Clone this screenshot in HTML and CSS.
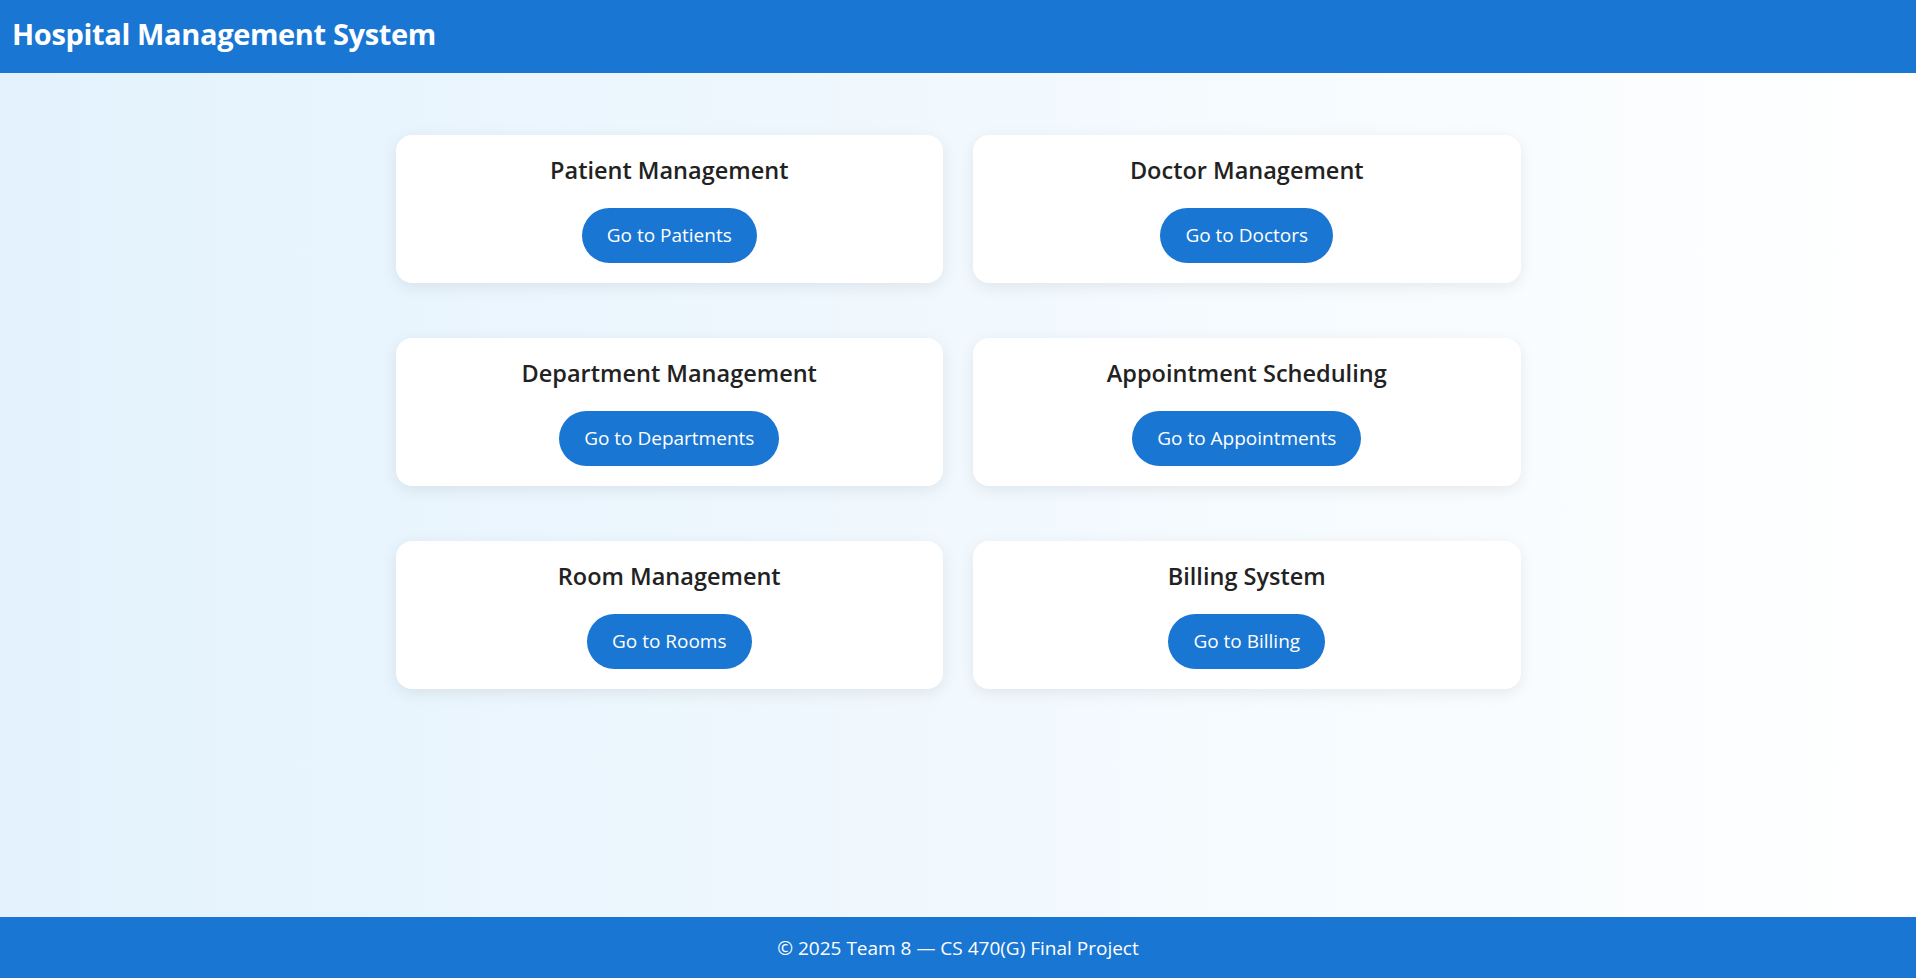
FILE: index.html
```html
<!DOCTYPE html>
<html lang="en">
<head>
<meta charset="utf-8">
<title>Hospital Management System</title>
<link rel="stylesheet" href="styles.css">
</head>
<body>
<header class="topbar">
  <h1 class="brand">Hospital Management System</h1>
</header>
<main class="main">
  <div class="grid">
    <section class="card">
      <h3 class="card-title">Patient Management</h3>
      <a class="btn" href="#">Go to Patients</a>
    </section>
    <section class="card">
      <h3 class="card-title">Doctor Management</h3>
      <a class="btn" href="#">Go to Doctors</a>
    </section>
    <section class="card">
      <h3 class="card-title">Department Management</h3>
      <a class="btn" href="#">Go to Departments</a>
    </section>
    <section class="card">
      <h3 class="card-title">Appointment Scheduling</h3>
      <a class="btn" href="#">Go to Appointments</a>
    </section>
    <section class="card">
      <h3 class="card-title">Room Management</h3>
      <a class="btn" href="#">Go to Rooms</a>
    </section>
    <section class="card">
      <h3 class="card-title">Billing System</h3>
      <a class="btn" href="#">Go to Billing</a>
    </section>
  </div>
</main>
<footer class="footer">© 2025 Team 8 — CS 470(G) Final Project</footer>
</body>
</html>
```

FILE: styles.css
```css
* { box-sizing: border-box; }

body {
  margin: 0;
  height: 100vh;
  display: flex;
  flex-direction: column;
  font-family: "Open Sans", "Noto Sans", "Liberation Sans", sans-serif;
  background: linear-gradient(to right, #e3f2fd 0%, #ffffff 100%);
  color: #222;
  overflow: hidden;
}

.topbar {
  background: #1976d2;
  color: #fff;
  height: 73px;
  flex: none;
  padding: 13px 12px 0;
}

.brand {
  margin: 0;
  font-size: 29px;
  line-height: 41px;
  font-weight: 700;
  letter-spacing: -0.35px;
}

.main {
  flex: 1;
  padding-top: 62px;
}

.grid {
  width: 1125px;
  margin: 0 auto;
  display: grid;
  grid-template-columns: 1fr 1fr;
  column-gap: 30px;
  row-gap: 55px;
}

.card {
  background: #fff;
  border-radius: 16px;
  box-shadow: 0 4px 16px rgba(0, 0, 0, 0.08);
  padding: 19px 20px 20px;
  display: flex;
  flex-direction: column;
  align-items: center;
  height: 148px;
}

.card-title {
  margin: 0 0 22px;
  font-size: 23.5px;
  line-height: 32px;
  font-weight: 600;
  color: #222;
}

.btn {
  display: block;
  background: #1976d2;
  color: #fff;
  text-decoration: none;
  font-size: 19px;
  line-height: 27px;
  padding: 14px 25px;
  border-radius: 28px;
}

.footer {
  background: #1976d2;
  color: #fff;
  text-align: center;
  font-size: 19px;
  line-height: 25px;
  height: 61px;
  flex: none;
  padding-top: 19px;
}
```
